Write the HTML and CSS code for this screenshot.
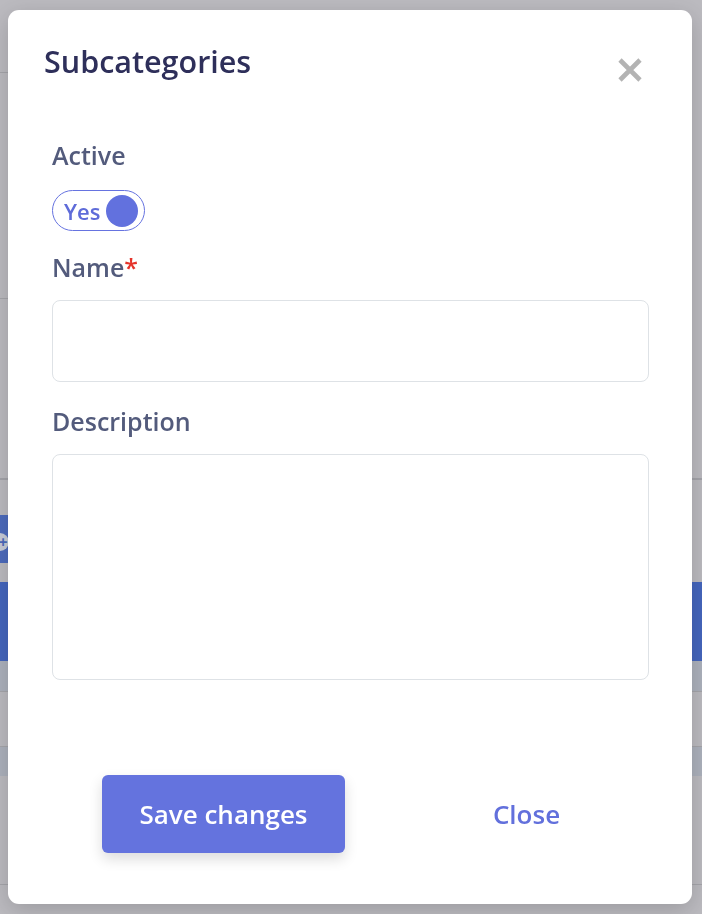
FILE: index.html
```html
<!DOCTYPE html>
<html lang="en">

<head>
    <meta charset="UTF-8">
    <meta name="viewport" content="width=device-width, initial-scale=1.0">
    <title>Subcategories</title>
    <link rel="stylesheet" href="styles.css">
</head>

<body>
    <!-- page behind the dialog, dimmed -->
    <div class="page">
        <div class="gap" style="height: 72px"></div>
        <div class="rule short"></div>
        <div class="gap" style="height: 225px"></div>
        <div class="rule short"></div>
        <div class="gap" style="height: 179px"></div>
        <div class="rule thick"></div>
        <div class="gap" style="height: 35px"></div>
        <div class="add-btn"><span class="add-icon">+</span></div>
        <div class="gap" style="height: 19px"></div>
        <div class="table-head"></div>
        <div class="row tinted" style="height: 30px"></div>
        <div class="rule"></div>
        <div class="gap" style="height: 54px"></div>
        <div class="rule"></div>
        <div class="row tinted" style="height: 29px"></div>
        <div class="gap" style="height: 108px"></div>
        <div class="rule"></div>
    </div>

    <div class="modal">
        <header class="modal-header">
            <h1>Subcategories</h1>
            <button class="close-x" type="button" aria-label="Close">
                <svg width="24" height="24" viewBox="0 0 24 24">
                    <path d="M2 2 L22 22 M22 2 L2 22" stroke="#b3b3b3" stroke-width="4.6" fill="none"/>
                </svg>
            </button>
        </header>

        <form class="modal-body">
            <div class="field">
                <label>Active</label>
                <div class="toggle">
                    <span>Yes</span>
                    <span class="knob"></span>
                </div>
            </div>

            <div class="field name-field">
                <label for="name">Name<span class="req">*</span></label>
                <input type="text" id="name" name="name">
            </div>

            <div class="field">
                <label for="description">Description</label>
                <textarea id="description" name="description"></textarea>
            </div>
        </form>

        <footer class="modal-footer">
            <button type="button" class="btn-save">Save changes</button>
            <button type="button" class="btn-close">Close</button>
        </footer>
    </div>
</body>

</html>
```

FILE: styles.css
```css
* {
    box-sizing: border-box;
}

body {
    margin: 0;
    padding: 0;
    font-family: "Open Sans", "Liberation Sans", sans-serif;
    background-color: #bcbbc0;
    height: 914px;
    overflow: hidden;
}

.page {
    display: flex;
    flex-direction: column;
}

.rule {
    height: 1px;
    background-color: #a6a6ab;
}

.rule.short {
    width: 40%;
}

.rule.thick {
    height: 2px;
    background-color: #a4a4aa;
}

.add-btn {
    height: 48px;
    width: 60px;
    background-color: #4d6bbd;
    display: flex;
    align-items: center;
    padding-top: 6px;
}

.add-icon {
    width: 18px;
    height: 18px;
    margin-left: -9px;
    border-radius: 50%;
    background-color: #c8ccd8;
    color: #4d6bbd;
    font-size: 16px;
    font-weight: 700;
    line-height: 18px;
    text-align: center;
    text-indent: 6px;
}

.table-head {
    height: 79px;
    background-color: #4566be;
}

.row.tinted {
    background-color: #adb2bd;
}

/* dialog */
.modal {
    position: fixed;
    top: 10px;
    left: 8px;
    width: 684px;
    height: 894px;
    background-color: #fff;
    border-radius: 11px;
    box-shadow: 0 6px 24px rgba(0, 0, 0, 0.18);
    padding-top: 31px;
    display: flex;
    flex-direction: column;
}

.modal-header {
    display: flex;
    justify-content: space-between;
    align-items: flex-start;
    padding: 0 50px 0 36px;
}

.modal-header h1 {
    margin: 0;
    font-size: 30.5px;
    line-height: 40px;
    font-weight: 600;
    color: #2e2f5a;
}

.close-x {
    border: none;
    background: none;
    padding: 0;
    margin-top: 17px;
    width: 24px;
    height: 24px;
    cursor: pointer;
}

.close-x svg {
    display: block;
}

.modal-body {
    margin-top: 56px;
    padding: 0 43px 0 44px;
}

.field {
    display: flex;
    flex-direction: column;
    margin-bottom: 20px;
}

.field.name-field {
    margin-bottom: 22px;
}

.field label {
    font-size: 25px;
    line-height: 34px;
    font-weight: 600;
    color: #535b7c;
    margin-bottom: 16px;
}

.req {
    color: #e5332a;
}

.toggle {
    width: 93px;
    height: 41px;
    border: 1px solid #6673e0;
    border-radius: 21px;
    display: flex;
    align-items: center;
    justify-content: space-between;
    padding: 0 6px 0 11px;
    margin-top: 2px;
    margin-bottom: -1px;
    color: #5f6cd9;
    font-size: 22px;
    font-weight: 600;
}

.knob {
    width: 32px;
    height: 32px;
    border-radius: 50%;
    background-color: #6271de;
}

input,
textarea {
    width: 100%;
    border: 1px solid #dee2e6;
    border-radius: 8px;
    font-family: inherit;
    font-size: 20px;
    resize: none;
}

input {
    height: 82px;
}

textarea {
    height: 226px;
}

.modal-footer {
    margin-top: auto;
    margin-bottom: 51px;
    display: flex;
    gap: 60px;
    padding: 0 44px 0 94px;
}

.modal-footer button {
    width: 243px;
    height: 78px;
    border: none;
    border-radius: 6px;
    font-family: inherit;
    font-size: 26px;
    font-weight: 600;
    cursor: pointer;
}

.btn-save {
    background-color: #6473de;
    color: #fff;
    box-shadow: 0 6px 14px rgba(0, 0, 0, 0.14);
}

.btn-close {
    background: none;
    color: #6270dc;
}
```
